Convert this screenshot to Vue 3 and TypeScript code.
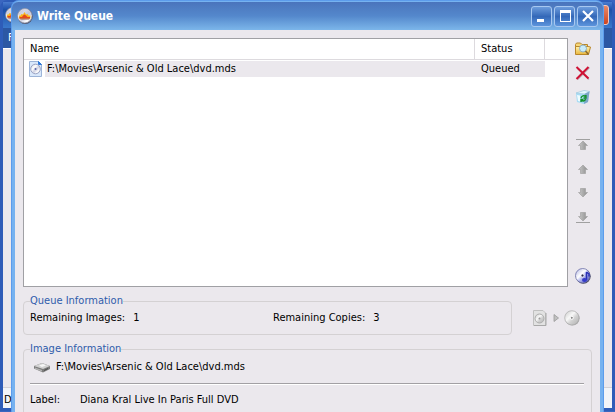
<script setup lang="ts">
interface QueueItem {
  path: string
  status: string
}

interface Detail {
  label: string
  value: string
}

const queue: QueueItem[] = [
  { path: 'F:\\Movies\\Arsenic & Old Lace\\dvd.mds', status: 'Queued' },
]

const remainingImages = 1
const remainingCopies = 3

const details: Detail[] = [
  { label: 'Label:', value: 'Diana Kral Live In Paris Full DVD' },
]

const moves: string[] = ['Move to top', 'Move up', 'Move down', 'Move to bottom']
</script>

<template>
  <div class="desktop">
    <svg class="defs" width="0" height="0" aria-hidden="true">
      <defs>
        <linearGradient id="silver" x1="0" y1="0" x2="1" y2="1">
          <stop offset="0" stop-color="#c4cad8" />
          <stop offset=".35" stop-color="#ffffff" />
          <stop offset=".55" stop-color="#cdd0e2" />
          <stop offset=".75" stop-color="#ffffff" />
          <stop offset="1" stop-color="#a9aec0" />
        </linearGradient>
        <linearGradient id="violet" x1="0" y1="0" x2="1" y2="1">
          <stop offset="0" stop-color="#a9aee0" />
          <stop offset=".4" stop-color="#ffffff" />
          <stop offset=".55" stop-color="#b8bdf0" />
          <stop offset="1" stop-color="#4048b8" />
        </linearGradient>
        <linearGradient id="grey" x1="0" y1="0" x2="1" y2="1">
          <stop offset="0" stop-color="#c8c8c8" />
          <stop offset=".4" stop-color="#f8f8f8" />
          <stop offset=".6" stop-color="#d2d2d2" />
          <stop offset="1" stop-color="#b0b0b0" />
        </linearGradient>
        <linearGradient id="folder" x1="0" y1="0" x2="0" y2="1">
          <stop offset="0" stop-color="#fff2b0" />
          <stop offset="1" stop-color="#e9b63c" />
        </linearGradient>
        <linearGradient id="arrow" x1="0" y1="0" x2="1" y2="0">
          <stop offset="0" stop-color="#c9c9c9" />
          <stop offset="1" stop-color="#8e8e8e" />
        </linearGradient>
        <symbol id="app-logo" viewBox="0 0 16 16">
          <circle cx="8.200" cy="8.300" r="7.600" fill="#4a4e66" />
          <circle cx="7.800" cy="7.800" r="7.200" fill="url(#silver)" stroke="#9094a8" stroke-width=".8" />
          <path d="M1.500 7.500a6.300 6.300 0 0 1 12.600 0z" fill="#b9bdd8" opacity=".6" />
          <path d="M2 10.500V7.500H3.500L4.500 6l1.500.5L7.500 4 9 6.500l1.500-.5 1 1.500H13.500v3Z" fill="#fbb41c" />
          <path d="M2.500 10.500V9H5L6 7.500l1.500-1L9 7.500 10.500 9H13v1.500Z" fill="#e4481c" />
          <path d="M2.500 10.500h10.500l-1 1H3.500Z" fill="#a8563c" />
        </symbol>
      </defs>
    </svg>

    <div class="main-window" aria-hidden="true">
      <div class="main-title">
        <svg class="icon"><use href="#app-logo" /></svg>
        <span class="main-close"></span>
      </div>
      <div class="main-menu">File</div>
      <div class="main-body"></div>
      <div class="main-status"><span>Done</span></div>
    </div>

    <section class="dialog" role="dialog" aria-labelledby="dialog-title">
      <header class="title-bar">
        <svg class="icon" aria-hidden="true"><use href="#app-logo" /></svg>
        <h1 id="dialog-title">Write Queue</h1>
        <div class="window-buttons">
          <button type="button" aria-label="Minimize">
            <svg viewBox="0 0 18 18"><path d="M4 12h7v3H4z" fill="#fff" /></svg>
          </button>
          <button type="button" aria-label="Maximize">
            <svg viewBox="0 0 18 18"><path d="M4 3h11v12H4zM5 6v8h9V6z" fill="#fff" fill-rule="evenodd" /></svg>
          </button>
          <button type="button" aria-label="Close">
            <svg viewBox="0 0 18 18"><path d="m4 4 10 10M14 4 4 14" stroke="#fff" stroke-width="2.200" /></svg>
          </button>
        </div>
      </header>

      <div class="content">
        <div class="queue">
          <div class="list">
            <table>
              <colgroup>
                <col />
                <col class="status-col" />
                <col class="rest-col" />
              </colgroup>
              <thead>
                <tr>
                  <th scope="col">Name</th>
                  <th scope="col">Status</th>
                  <td></td>
                </tr>
              </thead>
              <tbody>
                <tr v-for="item in queue" :key="item.path">
                  <td class="name-cell">
                    <div class="name">
                      <svg class="icon" viewBox="0 0 16 16" aria-hidden="true">
                        <path d="M1.500 .5h9l3 3v12h-12z" fill="#d9e8fb" stroke="#9cb4d8" />
                        <path d="m10.500 .5 3 3h-3z" fill="#2f78d8" stroke="#2f78d8" />
                        <circle cx="7.500" cy="8" r="4.800" fill="url(#silver)" stroke="#9aa3c4" />
                        <circle cx="7.500" cy="8" r="1" fill="#5864a8" />
                      </svg>
                      <span>{{ item.path }}</span>
                    </div>
                  </td>
                  <td class="status-cell"><span>{{ item.status }}</span></td>
                  <td></td>
                </tr>
              </tbody>
            </table>
          </div>

          <div class="tools">
            <div class="tool-group">
              <button type="button" aria-label="Add image">
                <svg class="icon" viewBox="0 0 16 16">
                  <path d="M.5 13V3.500l1-1.500h4l1.500 1.500h5.500V6" fill="#f6d678" stroke="#b8862a" />
                  <path d="M.5 13.500V5.500h12.500l2.500.5-2 7.500z" fill="url(#folder)" stroke="#b8862a" />
                  <circle cx="8" cy="7.500" r="3.500" fill="#c9ecfa" stroke="#8fb0c4" />
                  <path d="m10.500 10 3 3.500" stroke="#8b6a2c" stroke-width="1.500" />
                </svg>
              </button>
              <button type="button" aria-label="Remove image">
                <svg class="icon" viewBox="0 0 16 16">
                  <path d="M2.500 3.500 14 14.500M14.500 2.500 2.500 14.500" stroke="#b9b2bc" stroke-width="1.500" />
                  <path d="M1.500 2 13.500 13.500M13.500 2 1.500 14" stroke="#cf1235" stroke-width="2" />
                </svg>
              </button>
              <button type="button" aria-label="Clear queue">
                <svg class="icon" viewBox="0 0 16 16">
                  <path d="m1 4 8-2.500 5.500 1L13 13l-4 2-7-2z" fill="#a6dcf5" />
                  <path d="m1 4 8-2.500 5.500 1-5 2.500z" fill="#e4f8ff" stroke="#a4c8de" stroke-width=".7" />
                  <path d="m9.500 5 5-2.500L13 13l-4 2z" fill="#7ca6c8" />
                  <path d="m2 6 3 .5v6l-2-.5z" fill="#effcff" />
                  <path d="M6 9c.5-2 3-3 4.500-1.500M11 6v3H8.500M10.500 10c-.5 2-2.500 2.500-4 1.500M6 13v-2.500h2.500" fill="none" stroke="#12922b" stroke-width="1.300" />
                </svg>
              </button>
            </div>
            <div class="tool-group">
              <button v-for="(move, i) in moves" :key="move" type="button" :aria-label="move" disabled>
                <svg class="icon" viewBox="0 0 16 16">
                  <path v-if="i === 0" d="M1 2.500h14" stroke="#a0a0a0" />
                  <path v-if="i < 2" d="M8 4 12.500 8.500H10.500v4h-5v-4h-2z" fill="url(#arrow)" stroke="#a2a2a2" stroke-width=".7" />
                  <path v-else d="M5.500 3.500h5v4h2L8 12 3.500 7.500h2z" fill="url(#arrow)" stroke="#a2a2a2" stroke-width=".7" />
                  <path v-if="i === 3" d="M1 13.500h14" stroke="#a0a0a0" />
                </svg>
              </button>
            </div>
            <div class="tool-group">
              <button type="button" aria-label="Disc options">
                <svg class="icon" viewBox="0 0 16 16">
                  <circle cx="8.300" cy="8.300" r="7.400" fill="#44445c" />
                  <circle cx="7.700" cy="7.700" r="7.200" fill="url(#violet)" stroke="#6c70a8" stroke-width=".8" />
                  <circle cx="7.500" cy="7.500" r="1.500" fill="#26264a" stroke="#fff" stroke-width=".8" />
                  <path d="M11.500 4v8M11.500 4l2.500 2v2.500" fill="none" stroke="#2a30b4" stroke-width="1.500" />
                  <ellipse cx="9.500" cy="12" rx="2.500" ry="2" fill="#343ac8" />
                </svg>
              </button>
            </div>
          </div>
        </div>

        <div class="summary">
          <fieldset>
            <legend>Queue Information</legend>
            <dl class="counts">
              <div>
                <dt>Remaining Images:</dt>
                <dd>{{ remainingImages }}</dd>
              </div>
              <div>
                <dt>Remaining Copies:</dt>
                <dd>{{ remainingCopies }}</dd>
              </div>
            </dl>
          </fieldset>
          <div class="progress" aria-hidden="true">
            <svg class="icon" viewBox="0 0 16 16">
              <path d="M1.500 .5h9.500l2.500 2.500v12.500h-12z" fill="#e2e2e2" stroke="#c0c0c0" />
              <path d="M14 3v12.500H2" fill="none" stroke="#a8a8a8" />
              <circle cx="7.500" cy="8.500" r="4.500" fill="url(#grey)" stroke="#acacac" />
              <circle cx="7.500" cy="8.500" r="1" fill="#999" />
            </svg>
            <svg class="step" viewBox="0 0 6 8"><path d="M1 .5v7L5.500 4z" fill="#c0c0c0" stroke="#999" stroke-width=".8" /></svg>
            <svg class="icon" viewBox="0 0 16 16">
              <circle cx="8.300" cy="8.300" r="7.300" fill="#a2a2a2" />
              <circle cx="7.800" cy="7.800" r="7.100" fill="url(#grey)" stroke="#b4b4b4" stroke-width=".8" />
              <circle cx="7.800" cy="7.800" r="1.500" fill="#888" stroke="#fff" />
            </svg>
          </div>
        </div>

        <fieldset class="image-info">
          <legend>Image Information</legend>
          <p class="file">
            <svg class="icon" viewBox="0 0 16 16" aria-hidden="true">
              <path d="m0 7 8-3 8 3v3l-7 3.500-9-4z" fill="#7c7c7c" />
              <path d="m0 7 8-3 8 3-7 3z" fill="#d2d2d2" />
              <path d="m5 6.500 4-1.500 3 1.500-4 1.500z" fill="#f6f6f6" />
              <path d="m1 8.500 7 2.500v1.500L1 10z" fill="#b4b4b4" />
              <path d="m10 11 4-2v1l-4 2z" fill="#4c4c4c" />
            </svg>
            <span>{{ queue[0].path }}</span>
          </p>
          <hr />
          <dl class="details">
            <template v-for="detail in details" :key="detail.label">
              <dt>{{ detail.label }}</dt>
              <dd>{{ detail.value }}</dd>
            </template>
          </dl>
        </fieldset>
      </div>
    </section>
  </div>
</template>

<style>
body {
  margin: 0;
}
</style>

<style scoped>
.desktop {
  position: relative;
  height: 100vh;
  overflow: hidden;
  background: #3a66c0;
  color: #000;
  font: 11px/14px "DejaVu Sans Condensed", "Liberation Sans", sans-serif;
}

.defs {
  position: absolute;
}

.icon {
  display: block;
  flex: none;
  width: 16px;
  height: 16px;
}

/* Main window, mostly hidden behind the dialog */
.main-window {
  position: absolute;
  inset: 0 0 1px;
  box-sizing: border-box;
  display: flex;
  flex-direction: column;
  border: solid #2e5cb8;
  border-width: 2px 3px 3px;
  border-radius: 8px 8px 0 0;
  background: #ebe8ed;
}

.main-title {
  display: flex;
  align-items: center;
  justify-content: space-between;
  height: 26px;
  padding: 0 3px 0 2px;
  background: linear-gradient(#4a7cd0, #1c50a8 30%, #3a78cc);
}

.main-close {
  width: 16px;
  height: 18px;
  border: 1px solid #f0c8c0;
  border-radius: 3px;
  background: linear-gradient(#e88868, #cc4420);
}

.main-menu {
  height: 14px;
  padding: 3px 5px;
  background: #2c58a4;
  border-bottom: 1px solid #fff;
  color: #fff;
}

.main-body {
  flex: 1;
}

.main-status {
  height: 20px;
  padding: 0 1px;
  border-top: 1px solid #d4d2d6;
  background: #f2f4f8;
  line-height: 24px;
}

/* Dialog */
.dialog {
  position: absolute;
  top: 1px;
  left: 12px;
  right: 12px;
  box-sizing: border-box;
  border: solid #76b2f0;
  border-width: 1px 3px 3px;
  border-radius: 7px 7px 0 0;
  background: #ebe8ed;
  box-shadow: 0 0 0 1px #5c9cec;
}

.title-bar {
  display: flex;
  align-items: center;
  height: 28px;
  margin: 0 -3px;
  padding: 0 5px;
  box-sizing: border-box;
  border-radius: 6px 6px 0 0;
  background: linear-gradient(#4a74bc, #5488cc 50%, #7cb6ea);
}

h1 {
  flex: 1;
  margin: 0 0 0 4px;
  color: #fff;
  font: bold 12px/18px "DejaVu Sans Condensed", "Open Sans", sans-serif;
}

.window-buttons {
  display: flex;
  gap: 2px;
}

.window-buttons button {
  display: grid;
  place-items: center;
  width: 21px;
  height: 21px;
  padding: 0;
  border: 1px solid #a8c8f0;
  border-radius: 3px;
  background: linear-gradient(#6c9cdc, #3468b8 50%, #5c94dc);
}

.window-buttons svg {
  display: block;
  width: 18px;
  height: 18px;
}

.content {
  padding: 8px;
}

.queue {
  display: flex;
  gap: 7px;
}

.list {
  flex: 1;
  min-height: 247px;
  border: 1px solid #a0a0a4;
  background: #fff;
}

table {
  width: 100%;
  border-collapse: separate;
  border-spacing: 0;
  table-layout: fixed;
}

.status-col {
  width: 70px;
}

.rest-col {
  width: 22px;
}

th,
td {
  padding: 0 6px;
  text-align: left;
  font-weight: normal;
}

thead th,
thead td {
  height: 20px;
  border-bottom: 1px solid #dddade;
}

thead th {
  border-right: 1px solid #dddade;
}

.name-cell {
  padding: 1px 0 0 4px;
}

.name {
  display: flex;
  gap: 1px;
}

.name span,
.status-cell span {
  display: block;
  flex: 1;
  padding: 1px 0 1px 2px;
  background: #ebe8ed;
}

.status-cell {
  padding: 1px 0 0;
}

.status-cell span {
  padding-left: 6px;
}

.tools {
  display: flex;
  flex-direction: column;
  gap: 32px;
  padding: 3px 1px 3px 0;
}

.tool-group {
  display: grid;
  gap: 8px;
}

.tool-group:last-child {
  margin-top: auto;
}

.tools button {
  padding: 0;
  border: 0;
  background: none;
}

.summary {
  display: flex;
  align-items: center;
  margin-top: 7px;
}

fieldset {
  box-sizing: border-box;
  min-width: 0;
  margin: 0;
  padding: 3px 7px 9px 6px;
  border: 1px solid #d4d1d3;
  border-radius: 4px;
}

.summary fieldset {
  flex: 1;
}

legend {
  padding: 0;
  color: #2f5cab;
}

dl,
dd,
p {
  margin: 0;
}

.counts {
  display: grid;
  grid-template-columns: 1fr 1fr;
  column-gap: 12px;
}

.counts div {
  display: flex;
  gap: 8px;
}

.progress {
  display: flex;
  align-items: center;
  gap: 4px;
  padding: 6px 12px 0 20px;
}

.step {
  width: 8px;
  height: 8px;
}

.image-info {
  margin-top: 7px;
}

.file {
  display: flex;
  gap: 6px;
  align-items: center;
  padding-left: 4px;
}

hr {
  height: 1px;
  margin: 8px 0;
  border: 0;
  border-bottom: 1px solid #fff;
  background: #a2a0a4;
}

.details {
  display: grid;
  grid-template-columns: 50px 1fr;
}
</style>
